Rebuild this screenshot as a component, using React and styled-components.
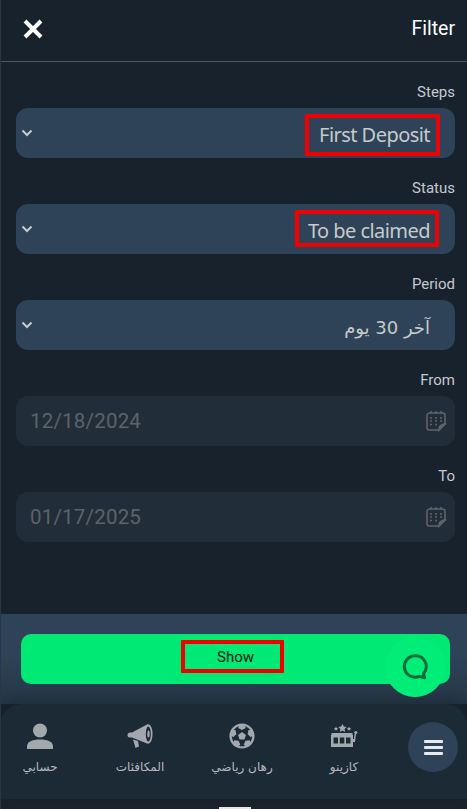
import React from 'react';
import styled, { createGlobalStyle } from 'styled-components';
import { FaFutbol } from 'react-icons/fa';

const GlobalStyle = createGlobalStyle`
  html, body { margin: 0; padding: 0; background: #18222c; }
  * { box-sizing: border-box; }
`;

const ARABIC = '"DejaVu Sans", sans-serif';

const Page = styled.div`
  position: relative;
  width: 467px;
  height: 809px;
  overflow: hidden;
  display: flex;
  flex-direction: column;
  background: #18222c;
  border-left: 1px solid #2a3641;
  font-family: Roboto, sans-serif;
`;

const Header = styled.header`
  height: 62px;
  flex: none;
  display: flex;
  align-items: center;
  justify-content: space-between;
  padding: 0 12px 4px 21px;
  border-bottom: 1px solid #44586c;
`;

const CloseButton = styled.svg`
  width: 22px;
  height: 22px;
  display: block;
`;

const Title = styled.h1`
  margin: 0;
  font-size: 19.5px;
  font-weight: 400;
  color: #fff;
`;

const Form = styled.main`
  flex: 1;
  display: flex;
  flex-direction: column;
  gap: 22px;
  padding: 22px 12px 0 15px;
`;

const Group = styled.div`
  display: flex;
  flex-direction: column;
  gap: 7px;
`;

const Label = styled.label`
  align-self: flex-end;
  height: 17px;
  line-height: 17px;
  font-size: 15px;
  color: #c3c9cf;
`;

const Field = styled.div`
  position: relative;
  height: 50px;
  display: flex;
  align-items: center;
  justify-content: space-between;
  border-radius: 12px;
  background: ${({ $disabled }) => ($disabled ? '#212e3a' : '#2e4358')};
`;

const Chevron = styled.svg`
  width: 12px;
  height: 8px;
  margin-left: 5px;
  margin-bottom: 1px;
`;

const SelectValue = styled.span`
  margin-right: 25px;
  margin-top: ${({ $arabic }) => ($arabic ? '5px' : '2px')};
  font-family: ${({ $arabic }) => ($arabic ? ARABIC : '"Noto Sans", sans-serif')};
  font-size: ${({ $arabic }) => ($arabic ? '18px' : '20px')};
  letter-spacing: ${({ $arabic }) => ($arabic ? '0' : '-0.55px')};
  color: #c6cacd;
`;

const DateValue = styled.span`
  margin-left: 14px;
  font-size: 20.5px;
  letter-spacing: 0.2px;
  color: #5d6367;
`;

const CalendarSvg = styled.svg`
  width: 22px;
  height: 22px;
  margin-right: 8px;
`;

// red annotation frames drawn over the screenshot
const Marker = styled.div`
  position: absolute;
  right: ${({ $right }) => $right}px;
  top: ${({ $top }) => $top}px;
  width: ${({ $w }) => $w}px;
  height: ${({ $h }) => $h}px;
  border: 4px solid #f00000;
  border-radius: 1px;
  pointer-events: none;
`;

const Footer = styled.section`
  height: 90px;
  flex: none;
  padding: 20px 17px 0 20px;
  background: linear-gradient(#2e4358 0%, #2e4358 45%, #263645 100%);
`;

const ShowButton = styled.button`
  position: relative;
  width: 100%;
  height: 50px;
  display: flex;
  align-items: center;
  justify-content: center;
  padding: 0 0 5px;
  border: 0;
  border-radius: 10px;
  background: #00e975;
  color: #0a1a12;
  font-family: Roboto, sans-serif;
  font-size: 15px;
`;

const ChatBubble = styled.div`
  position: absolute;
  left: 384px;
  top: 637px;
  width: 60px;
  height: 60px;
  border-radius: 50%;
  display: flex;
  align-items: center;
  justify-content: center;
  background: #00ee78;
  z-index: 3;
`;

const Nav = styled.nav`
  position: relative;
  z-index: 2;
  height: 95px;
  flex: none;
  display: flex;
  align-items: flex-start;
  padding: 17px 9px 0 0;
  background: #1c2a36;
  border-radius: 22px 22px 0 0;
  margin-left: -1px;
  box-shadow: 0 -6px 12px rgba(24, 34, 44, 0.35);
`;

const NavItem = styled.div`
  width: ${({ $w }) => $w}px;
  flex: none;
  display: flex;
  flex-direction: column;
  align-items: center;
  color: #a2a8ae;
`;

const NavIcon = styled.div`
  height: 30px;
  display: flex;
  align-items: center;
  justify-content: center;
`;

const NavLabel = styled.span`
  margin-top: 7px;
  font-family: ${ARABIC};
  font-size: 12px;
  line-height: 18px;
  color: #b4b9be;
  white-space: nowrap;
`;

const MenuButton = styled.button`
  width: 50px;
  height: 50px;
  margin: 1px 0 0 auto;
  padding: 0;
  border: 0;
  border-radius: 50%;
  display: flex;
  flex-direction: column;
  align-items: center;
  justify-content: center;
  gap: 3px;
  background: #2e4358;
`;

const MenuLine = styled.span`
  width: 19px;
  height: 3px;
  border-radius: 1px;
  background: #e8ebee;
`;

const SystemBar = styled.div`
  height: 10px;
  flex: none;
  display: flex;
  justify-content: center;
  align-items: flex-end;
  background: #1c222b;
  margin-left: -1px;
`;

const HomeIndicator = styled.span`
  width: 32px;
  height: 2px;
  margin-right: -3px;
  background: #e4e6e8;
`;

const ChevronIcon = () => (
  <Chevron viewBox="0 0 12 8">
    <path d="M1.5 1.5 6 6l4.5-4.500" fill="none" stroke="#c6cacd" strokeWidth="2" />
  </Chevron>
);

const CalendarIcon = () => (
  <CalendarSvg viewBox="0 0 22 22" fill="none" stroke="#5d6367" strokeWidth="1.6">
    <path d="M14 20H4.500A2.500 2.500 0 0 1 2 17.500V5.500A2.500 2.500 0 0 1 4.500 3h13A2.500 2.500 0 0 1 20 5.500V14z" />
    <path d="M14 20c0-4 2-6 6-6l-6 6z" fill="#5d6367" />
    <path d="M6 1v3M11 1v3M16 1v3" />
    <path d="M5 8h2M10 8h2M15 8h2M5 11h2M10 11h2M15 11h2M5 14.500h2M10 14.500h2" strokeWidth="1.500" />
  </CalendarSvg>
);

const SelectField = ({ label, value, arabic, marker }) => (
  <Group>
    <Label>{label}</Label>
    <Field>
      <ChevronIcon />
      <SelectValue $arabic={arabic}>{value}</SelectValue>
      {marker && <Marker $right={marker.right} $top={marker.top} $w={marker.w} $h={marker.h} />}
    </Field>
  </Group>
);

const DateField = ({ label, value }) => (
  <Group>
    <Label>{label}</Label>
    <Field $disabled>
      <DateValue>{value}</DateValue>
      <CalendarIcon />
    </Field>
  </Group>
);

const UserIcon = () => (
  <svg width="28" height="28" viewBox="0 0 28 28" fill="#a2a8ae">
    <circle cx="14" cy="8.500" r="7" />
    <path d="M1 27v-2.500C1 20 6 17.500 14 17.500S27 20 27 24.500V27z" />
  </svg>
);

const BullhornIcon = () => (
  <svg width="28" height="28" viewBox="1 0 28 28">
    <path d="M7 10.500 22 2.500c3.500-1 5.500 4 5.500 9.500s-2 10.500-5.500 9.500L7 15.500z" fill="#a2a8ae" />
    <ellipse cx="23.300" cy="12" rx="2.500" ry="7.500" fill="#1c2a36" />
    <ellipse cx="23.500" cy="12" rx="1.200" ry="3.500" fill="#a2a8ae" />
    <path d="M5 10.500h2v5H5A2.500 2.500 0 0 1 5 10.500z" fill="#a2a8ae" />
    <path d="M8 17.500l5 1.500 1 5.500-3.500 1.500z" fill="#a2a8ae" />
  </svg>
);

const SlotIcon = () => (
  <svg width="28" height="24" viewBox="0 0 28 24" fill="#a2a8ae">
    <path d="M12.500 0l1.300 2.600 2.900.4-2.100 2 .5 2.900-2.600-1.400L9.900 7.900l.5-2.900-2.100-2 2.900-.4z" />
    <path d="M6 2.500l.7 1.400 1.500.2-1.100 1 .3 1.500L6 5.900l-1.400.7.300-1.500-1.100-1 1.500-.2zM19 2.500l.7 1.400 1.500.2-1.100 1 .3 1.500-1.400-.7-1.400.7.300-1.500-1.100-1 1.500-.2z" />
    <path d="M1.500 9h21v2h-21z" />
    <path fillRule="evenodd" d="M1 11h22v12H1zM3.500 13.500v6h4.500v-6zM9.800 13.500v6h4.500v-6zM16 13.500v6h4.500v-6z" />
    <path d="M23 18h2l1-8h-1.500l-.5 5h-1z" />
    <circle cx="25.800" cy="8.500" r="1.600" />
  </svg>
);

const ChatIcon = () => (
  <svg width="28" height="28" viewBox="0 0 26 26" fill="none" stroke="#0b6b3a" strokeWidth="2.800">
    <path d="M13 2.500a10 10 0 1 0 4 19.200l5 1.300-1.200-3.800A10 10 0 0 0 13 2.500z" strokeLinejoin="round" />
  </svg>
);

export default function App() {
  return (
    <Page>
      <GlobalStyle />
      <Header>
        <CloseButton viewBox="0 0 22 22">
          <path d="M3 3l16 16M19 3 3 19" stroke="#fff" strokeWidth="4" />
        </CloseButton>
        <Title>Filter</Title>
      </Header>
      <Form>
        <SelectField label="Steps" value="First Deposit" marker={{ right: 15, top: 6, w: 135, h: 42 }} />
        <SelectField label="Status" value="To be claimed" marker={{ right: 16, top: 6, w: 144, h: 37 }} />
        <SelectField label="Period" value="آخر 30 يوم" arabic />
        <DateField label="From" value="12/18/2024" />
        <DateField label="To" value="01/17/2025" />
      </Form>
      <Footer>
        <ShowButton>
          Show
          <Marker $right={166} $top={6} $w={103} $h={33} />
        </ShowButton>
      </Footer>
      <ChatBubble><ChatIcon /></ChatBubble>
      <Nav>
        <NavItem $w={80}>
          <NavIcon><UserIcon /></NavIcon>
          <NavLabel>حسابي</NavLabel>
        </NavItem>
        <NavItem $w={120}>
          <NavIcon><BullhornIcon /></NavIcon>
          <NavLabel>المكافئات</NavLabel>
        </NavItem>
        <NavItem $w={84}>
          <NavIcon><FaFutbol size={26} /></NavIcon>
          <NavLabel>رهان رياضي</NavLabel>
        </NavItem>
        <NavItem $w={120}>
          <NavIcon><SlotIcon /></NavIcon>
          <NavLabel>كازينو</NavLabel>
        </NavItem>
        <MenuButton aria-label="menu">
          <MenuLine />
          <MenuLine />
          <MenuLine />
        </MenuButton>
      </Nav>
      <SystemBar><HomeIndicator /></SystemBar>
    </Page>
  );
}
